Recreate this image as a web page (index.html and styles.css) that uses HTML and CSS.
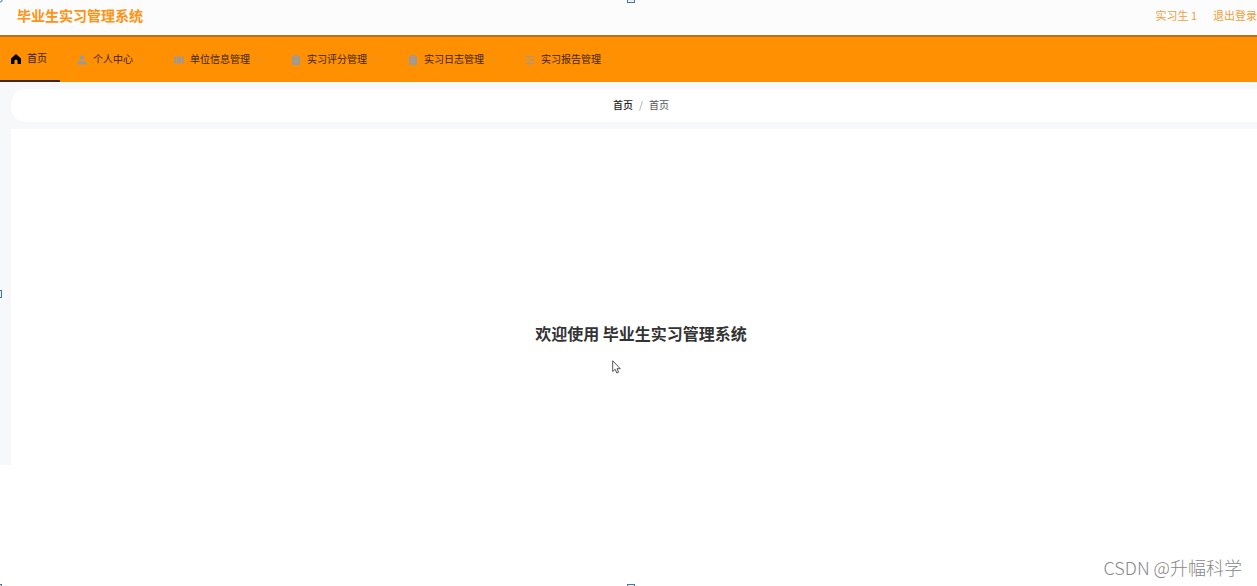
FILE: index.html
```html
<!DOCTYPE html>
<html lang="zh-CN">
<head>
<meta charset="utf-8">
<title>毕业生实习管理系统</title>
<link rel="stylesheet" href="styles.css">
</head>
<body>
<header class="topbar">
  <h1 class="brand">毕业生实习管理系统</h1>
  <div class="account">
    <span>实习生 1</span>
    <a class="logout" href="#">退出登录</a>
  </div>
</header>
<nav class="menu">
  <a class="item home" href="#">
    <svg class="icon" viewBox="0 0 10 10"><path d="M5 0L0 4.5V10H3.4V7a1.6 1.6 0 0 1 3.2 0V10H10V4.5Z"/></svg>
    <span>首页</span>
  </a>
  <button class="item" type="button">
    <svg class="icon" viewBox="0 0 10 10"><circle cx="5" cy="2.6" r="2.4"/><path d="M.4 9.6V8.2Q.4 6 3 6H7Q9.6 6 9.6 8.2V9.6Z"/></svg>
    <span>个人中心</span>
    <svg class="chevron" viewBox="0 0 6 6"><path d="M.5 1.5L3 4 5.500 1.5"/></svg>
  </button>
  <button class="item" type="button">
    <svg class="icon" viewBox="0 0 10 10"><path d="M0 1.500H2V8.500H0V6.500Q1.300 5 0 3.500ZM2.700 1.500H7.300V8.500H2.700ZM8 1.500H10V3.500Q8.700 5 10 6.500V8.500H8Z"/></svg>
    <span>单位信息管理</span>
    <svg class="chevron" viewBox="0 0 6 6"><path d="M.5 1.5L3 4 5.500 1.5"/></svg>
  </button>
  <button class="item" type="button">
    <svg class="icon" viewBox="0 0 10 10"><path d="M1 1H3V0H7V1H9V10H1Z"/><path class="mark" d="M3 1.800H7M3.500 4L6.500 7.500M6.500 4L3.500 7.500"/></svg>
    <span>实习评分管理</span>
    <svg class="chevron" viewBox="0 0 6 6"><path d="M.5 1.5L3 4 5.500 1.5"/></svg>
  </button>
  <button class="item" type="button">
    <svg class="icon" viewBox="0 0 10 10"><path d="M1 1H3V0H7V1H9V10H1Z"/><path class="mark" d="M3 1.800H7M2.500 4.500H7.500M2.500 7H7.500"/></svg>
    <span>实习日志管理</span>
    <svg class="chevron" viewBox="0 0 6 6"><path d="M.5 1.5L3 4 5.500 1.5"/></svg>
  </button>
  <button class="item" type="button">
    <svg class="icon" viewBox="0 0 10 10"><path d="M0 1H10V1.700H0ZM0 4.700H10V5.400H0ZM0 8.300H10V9H0ZM2 .3H4V2.400H2ZM6 4H8V6.100H6ZM3 7.600H5V9.700H3Z"/></svg>
    <span>实习报告管理</span>
    <svg class="chevron" viewBox="0 0 6 6"><path d="M.5 1.5L3 4 5.500 1.5"/></svg>
  </button>
</nav>
<main class="page">
  <div class="crumbs">
    <a class="crumb" href="#">首页</a>
    <span class="slash">/</span>
    <span>首页</span>
  </div>
  <section class="welcome">
    <h2 class="greeting">欢迎使用 毕业生实习管理系统</h2>
  </section>
</main>
<footer class="credit">CSDN @升幅科学</footer>
<svg class="pointer" viewBox="0 0 9 14"><path d="M.7.8V11.500L3.200 9.300 4.800 13 6.600 12.200 5 8.700H8.300Z"/></svg>
<i class="handle corner"></i>
<i class="handle top"></i>
<i class="handle left"></i>
<i class="handle bottom"></i>
<i class="handle foot"></i>
</body>
</html>
```
FILE: styles.css
```css
* { box-sizing: border-box; }
body {
  margin: 0;
  position: relative;
  min-height: 100vh;
  display: flex;
  flex-direction: column;
  overflow: hidden;
  background: #fff;
  color: #303133;
  font: 10px/16px "Noto Sans CJK SC", sans-serif;
}
a { color: inherit; text-decoration: none; }
.topbar {
  display: flex;
  justify-content: space-between;
  align-items: center;
  height: 35px;
  padding: 0 0 6px 17px;
  background: #fcfcfc;
  color: #ff9212;
}
.brand { margin: 0; font-size: 14px; line-height: 20px; font-weight: 700; }
.account { display: flex; gap: 16px; font-size: 11px; color: #eea03c; }
.menu {
  display: flex;
  height: 47px;
  border-top: 2px solid #b8731a;
  background: #ff9002;
}
.item {
  display: flex;
  align-items: center;
  gap: 6px;
  padding: 0 12px 0 17px;
  border: 0;
  background: none;
  color: #3c2410;
  font: inherit;
  white-space: nowrap;
}
.home { padding: 0 13px 0 11px; border-bottom: 2px solid #3a2a1c; color: #33200c; }
.item span { padding-bottom: 1px; }
.icon { width: 10px; height: 10px; fill: #9c9a98; }
.home .icon { fill: #000; }
.mark { fill: none; stroke: #c59a62; stroke-width: 1; }
.chevron { width: 6px; height: 6px; fill: none; stroke: #cf9a4c; }
.page {
  display: flex;
  flex-direction: column;
  gap: 7px;
  padding: 7px 0 0 11px;
  background: #f6f8fa;
}
.crumbs {
  display: flex;
  justify-content: center;
  align-items: center;
  gap: 6px;
  height: 33px;
  padding: 0 0 2px 14px;
  border-radius: 15px 0 0 15px;
  background: #fff;
  color: #555;
}
.crumb { color: #222; font-weight: 500; }
.slash { color: #999; }
.welcome {
  display: flex;
  justify-content: center;
  padding: 192px 0 120px 14px;
  background: #fff;
}
.greeting { margin: 0; font-size: 16px; line-height: 24px; font-weight: 700; color: #333; }
.credit {
  margin-top: auto;
  padding: 0 15px 6px;
  text-align: right;
  font-size: 18px;
  line-height: 26px;
  font-weight: 300;
  color: #888;
}
.pointer {
  position: absolute;
  left: 612px;
  top: 360px;
  width: 9px;
  height: 14px;
  fill: #fff;
  stroke: #555;
}
.handle { position: absolute; width: 8px; height: 8px; border: 1px solid #4b7695; background: #e3f2fa; }
.corner { left: -5px; top: -5px; border-radius: 4px; }
.top { left: 50%; top: -5px; margin-left: -2px; }
.left { left: -6px; top: 290px; }
.bottom { left: 50%; bottom: -6px; margin-left: -2px; }
.foot { left: -6px; bottom: -6px; }
```
